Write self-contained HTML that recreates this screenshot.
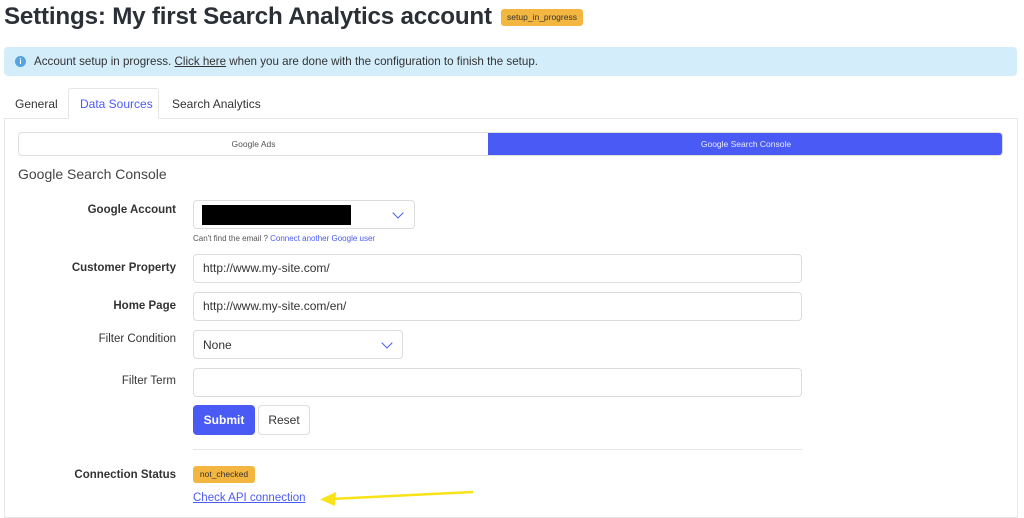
<!DOCTYPE html>
<html><head><style>
*{box-sizing:border-box;margin:0;padding:0}
body{width:1024px;height:515px;overflow:hidden;background:#fff;font-family:"Liberation Sans",sans-serif;color:#333;position:relative}
.a{position:absolute}
h1{position:absolute;left:4px;top:3px;font-size:24.2px;font-weight:bold;color:#2b2f36;letter-spacing:-0.2px;white-space:nowrap}
.badge{position:absolute;background:#f3b640;border-radius:3px;font-size:8.5px;color:#333;text-align:center}
.alert{left:4px;top:47px;width:1013px;height:29px;background:#d3edfb;border-radius:4px;font-size:11.6px;color:#333;padding:8px 0 0 30px;white-space:nowrap}
.alert u{color:#333}
.info{position:absolute;left:11px;top:9px;width:11px;height:11px;border-radius:50%;background:#55a3e0;color:#fff;font-size:8px;text-align:center;line-height:11px;font-weight:bold}
.tab{font-size:12px;top:97px}
.panel{left:4px;top:118px;width:1014px;height:400px;border:1px solid #e6e6e6}
.dtab{left:68px;top:88px;width:91px;height:31px;border:1px solid #e6e6e6;border-bottom:1px solid #fff;background:#fff;border-radius:3px 3px 0 0}
.seg{left:18px;top:132px;width:985px;height:24px;border:1px solid #ddd;border-radius:4px;overflow:hidden;font-size:8.5px}
.lbl{font-size:11.5px;text-align:right;width:176px;left:0;color:#333}
.b{font-weight:bold}
.inp{border:1px solid #dcdcdc;border-radius:4px;background:#fff;font-size:12px;padding-left:9px;color:#333}
.chev{position:absolute;width:8px;height:8px;border-right:1.5px solid #4a5bf5;border-bottom:1.5px solid #4a5bf5;transform:rotate(45deg)}
</style></head><body>
<h1>Settings: My first Search Analytics account</h1>
<div class="badge" style="left:501px;top:9px;width:82px;height:17px;line-height:17px">setup_in_progress</div>
<div class="a alert"><span class="info">i</span>Account setup in progress. <u>Click here</u> when you are done with the configuration to finish the setup.</div>
<div class="a panel"></div>
<div class="a dtab"></div>
<div class="a tab" style="left:15px">General</div>
<div class="a tab" style="left:80px;color:#4a5bf5">Data Sources</div>
<div class="a tab" style="left:172px">Search Analytics</div>
<div class="a seg">
<div class="a" style="left:0;top:0;width:469px;height:22px;line-height:22px;text-align:center;color:#555">Google Ads</div>
<div class="a" style="left:469px;top:0;width:516px;height:22px;line-height:22px;text-align:center;color:#e8eaff;background:#4a5bf5">Google Search Console</div>
</div>
<div class="a" style="left:18px;top:166px;font-size:14px;color:#444">Google Search Console</div>

<div class="a lbl b" style="top:204px">Google Account</div>
<div class="a inp" style="left:193px;top:200px;width:222px;height:29px"><div class="a" style="left:8px;top:4px;width:149px;height:20px;background:#000"></div><div class="chev" style="left:200px;top:8px"></div></div>
<div class="a" style="left:193px;top:234px;font-size:8px;color:#555">Can't find the email ? <span style="color:#4a5bf5">Connect another Google user</span></div>

<div class="a lbl b" style="top:262px">Customer Property</div>
<div class="a inp" style="left:193px;top:254px;width:609px;height:29px;line-height:27px">http://www.my-site.com/</div>
<div class="a lbl b" style="top:300px">Home Page</div>
<div class="a inp" style="left:193px;top:292px;width:609px;height:29px;line-height:27px">http://www.my-site.com/en/</div>
<div class="a lbl" style="top:333px">Filter Condition</div>
<div class="a inp" style="left:193px;top:330px;width:210px;height:29px;line-height:28px">None<div class="chev" style="left:189px;top:8px"></div></div>
<div class="a lbl" style="top:375px">Filter Term</div>
<div class="a inp" style="left:193px;top:368px;width:609px;height:29px"></div>
<div class="a" style="left:193px;top:405px;width:62px;height:30px;background:#4a5bf5;border-radius:4px;color:#fff;font-size:12px;font-weight:bold;text-align:center;line-height:30px">Submit</div>
<div class="a" style="left:258px;top:405px;width:52px;height:30px;border:1px solid #dcdcdc;border-radius:4px;font-size:12px;text-align:center;line-height:28px">Reset</div>
<div class="a" style="left:193px;top:449px;width:609px;height:1px;background:#e6e6e6"></div>
<div class="a lbl b" style="top:469px">Connection Status</div>
<div class="badge" style="left:193px;top:466px;width:62px;height:17px;line-height:17px">not_checked</div>
<div class="a" style="left:193px;top:492px;font-size:11.5px;color:#4a5bf5;text-decoration:underline">Check API connection</div>
<svg class="a" style="left:310px;top:484px" width="170" height="24"><line x1="163" y1="8" x2="20" y2="15" stroke="#f7e318" stroke-width="2.5"/><polygon points="10,15.5 26,8 25,22" fill="#f7e318"/></svg>
</body></html>
